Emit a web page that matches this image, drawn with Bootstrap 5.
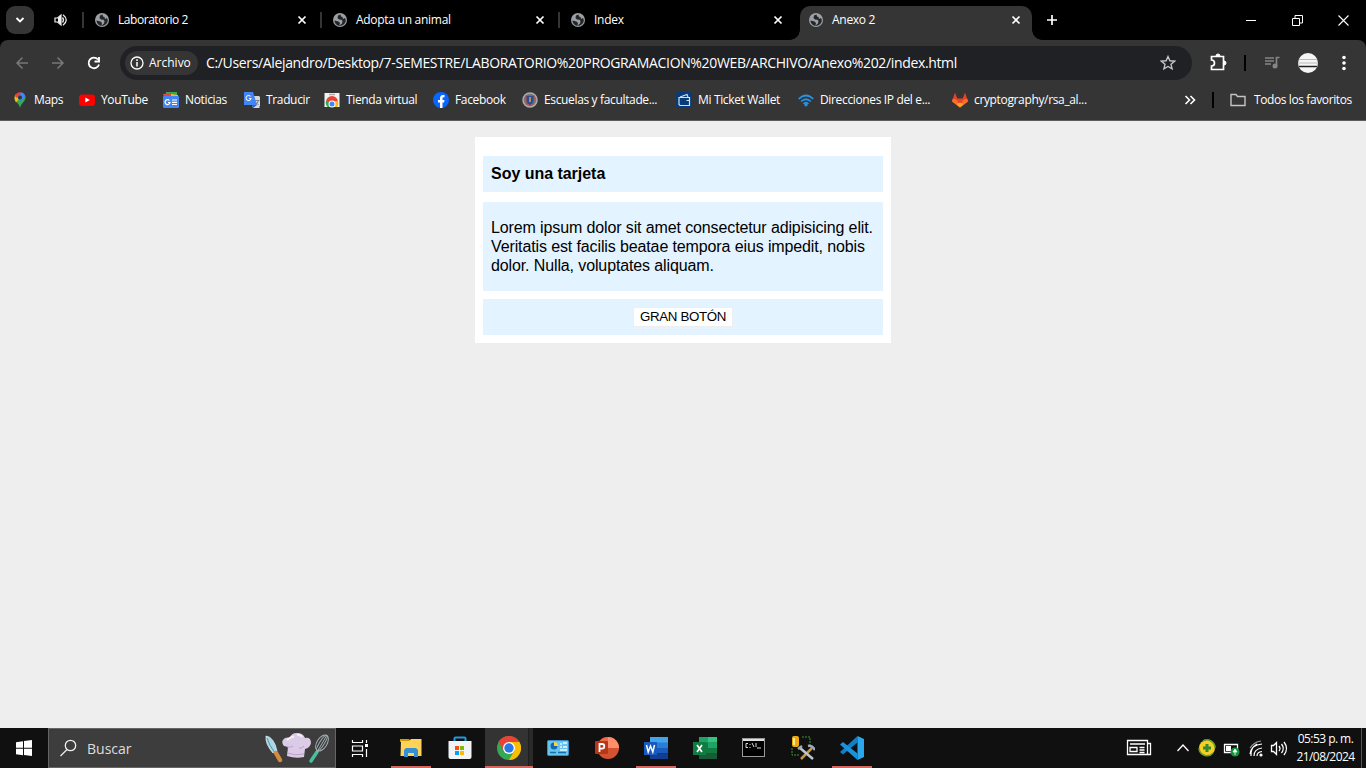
<!DOCTYPE html>
<html lang="es">
<head>
<meta charset="utf-8">
<meta name="viewport" content="width=device-width, initial-scale=1">
<title>Anexo 2</title>
<link href="https://cdn.jsdelivr.net/npm/bootstrap@5.3.0/dist/css/bootstrap.min.css" rel="stylesheet">
<style>
body{font-family:"Open Sans","Noto Sans",sans-serif;font-size:12px;line-height:16px;color:#fff;height:100vh;background:#eee;overflow:hidden;white-space:nowrap}
svg{display:block;flex:none}
.tabstrip{height:40px;background:#000}
.tabsearch{width:28px;height:28px;margin:0 20px 0 6px;border-radius:9px;background:#353535}
.chrome-tab{width:238px;height:34px;padding:0 14px 0 12px;position:relative;letter-spacing:-.28px}
.chrome-tab.first{margin-left:-1px;letter-spacing:-.45px}
.chrome-tab::before{content:"";position:absolute;left:-1px;top:9px;width:2px;height:16px;background:#353535}
.chrome-tab .lbl{margin-left:9px}
.chrome-tab.on{width:232px;margin-left:3px;padding:0 11px 6px 9px;align-self:flex-end;background:#353535;border-radius:10px 10px 0 0}
.chrome-tab.on::before,.chrome-tab.on::after{content:"";position:absolute;top:auto;bottom:0;width:10px;height:10px}
.chrome-tab.on::before{left:-10px;background:radial-gradient(circle at 0 0,transparent 9.5px,#353535 10px)}
.chrome-tab.on::after{right:-10px;background:radial-gradient(circle at 100% 0,transparent 9.5px,#353535 10px)}
.newtab{margin-left:14px}
.winbtns{gap:35px;padding-right:17px}
.shell{background:#000}
.bars{height:81px;background:#353535;border-bottom:1px solid #5c5c5c;border-radius:8px 8px 0 0}
.tools{height:46px}
.omni{width:1072px;height:34px;border-radius:17px;background:#202124;padding-left:5px;padding-right:16px}
.chip{width:73px;height:24px;border-radius:12px;background:#353535;padding-left:5px;gap:5px}
.url{margin-left:8px;font-size:14px;line-height:20px;letter-spacing:-.35px}
.marks{height:28px;padding-left:12px;letter-spacing:-.35px}
.mk{gap:6px;overflow:hidden}
.mk:nth-child(1){width:67px}.mk:nth-child(2){width:84px}.mk:nth-child(3){width:81px}.mk:nth-child(4){width:80px}
.mk:nth-child(5){width:109px}.mk:nth-child(6){width:89px}.mk:nth-child(7){width:154px}.mk:nth-child(8){width:122px}
.mk:nth-child(9){width:154px}.mk:nth-child(10){width:228px}
.allmarks{margin-left:-26px;letter-spacing:-.4px}
.viewport{font-family:"Liberation Sans",Arial,sans-serif;font-size:16px;line-height:19px;color:#000;padding-top:16px;white-space:normal}
.tarjeta{width:416px;background:#fff;padding:19px 8px 8px}
.tarjeta>*{background:#e3f3ff;padding:8px}
.tarjeta h1{font-size:16px;line-height:20px;font-weight:700;height:36px;margin:0 0 10px;letter-spacing:-.03px}
.tarjeta p{padding:16px 8px;height:89px;margin:0 0 8px;letter-spacing:-.12px}
.pie{height:36px}
.gran{width:100px;height:20px;background:#fff;border:1px solid #eee;font-size:13.33px;line-height:18px;padding:0;color:#000;letter-spacing:-.35px}
.taskbar{height:40px;background:#101010}
.buscar{width:288px;height:40px;background:#3d3d3d;border:1px solid #666;padding-left:11px;padding-right:6px;font-size:14px;color:#ddd}
.buscar span{margin-left:9px;padding-top:1px}
.app{width:49px;height:40px;position:relative}
.app.run::after{content:"";position:absolute;left:4.5px;width:40px;bottom:0;height:2px;background:#d2685f}
.app.cur{background:linear-gradient(90deg,transparent 1px,#333 1px,#333 44px,#1e1e1e 44px,#1e1e1e 45px,#292929 45px)}
.app.cur::after{left:1px;width:48px}
.clock{width:68px;line-height:18px;letter-spacing:-.55px;padding-right:3px}
.edge{width:1px;height:40px;background:#555;margin-right:4px}
</style>
</head>
<body class="d-flex flex-column">
<svg width="0" height="0" class="position-absolute">
<defs>
<symbol id="globe" viewBox="0 0 14 14"><circle cx="7" cy="7" r="7" fill="#9aa0a6"/><path d="M7.500 1.500 5 2.500 4.500 5l1.500 1.500 2.500.3L9.500 8 9 10.500 6.500 12.500 7 10 5.500 8.500 1.500 7.500C1.500 10.500 4 12.800 7 12.800c3.400 0 5.800-2.700 5.800-5.800L12 5 10 6 9.500 4 8 3.500Z" fill="#262626"/></symbol>
<symbol id="cross" viewBox="0 0 10 10"><path d="M1.500 1.500l7 7m0-7l-7 7" stroke="#fff" stroke-width="1.700"/></symbol>
</defs>
</svg>
<header class="shell">
<div class="tabstrip d-flex align-items-center">
<div class="tabsearch d-flex align-items-center justify-content-center"><svg width="10" height="8"><path d="M1.500 2l3.500 3.500L8.500 2" fill="none" stroke="#fff" stroke-width="1.800"/></svg></div>
<svg width="14" height="14" class="me-3"><path d="M1 5h2.500L7 2v10L3.500 9H1Z" fill="none" stroke="#eee" stroke-width="1.200"/><path d="M4 5l3-3v10L4 9Z" fill="#eee"/><path d="M8.500 4.500q2 2.500 0 5M9 1.800q6.500 5.200 0 10.400" fill="none" stroke="#eee" stroke-width="1.300"/></svg>
<div class="chrome-tab first d-flex align-items-center"><svg width="14" height="14"><use href="#globe"/></svg><span class="lbl">Laboratorio 2</span><svg width="10" height="10" class="ms-auto"><use href="#cross"/></svg></div>
<div class="chrome-tab d-flex align-items-center"><svg width="14" height="14"><use href="#globe"/></svg><span class="lbl">Adopta un animal</span><svg width="10" height="10" class="ms-auto"><use href="#cross"/></svg></div>
<div class="chrome-tab d-flex align-items-center"><svg width="14" height="14"><use href="#globe"/></svg><span class="lbl">Index</span><svg width="10" height="10" class="ms-auto"><use href="#cross"/></svg></div>
<div class="chrome-tab on d-flex align-items-center"><svg width="14" height="14"><use href="#globe"/></svg><span class="lbl">Anexo 2</span><svg width="10" height="10" class="ms-auto"><use href="#cross"/></svg></div>
<svg width="12" height="12" class="newtab"><path d="M6 1v10M1 6h10" stroke="#fff" stroke-width="1.700"/></svg>
<div class="winbtns d-flex ms-auto align-items-center"><svg width="11" height="11"><path d="M0 5.500h10" stroke="#fff"/></svg><svg width="11" height="11"><path d="M.5 3.500h7v7h-7ZM3 3V.5h7.500V8H8" fill="none" stroke="#fff"/></svg><svg width="11" height="11"><path d="M.5.5l10 10m0-10l-10 10" stroke="#fff" stroke-width="1.100"/></svg></div>
</div>
<div class="bars">
<div class="tools d-flex align-items-center">
<svg width="120" height="34" fill="none" stroke="#777" stroke-width="1.500"><path d="M28 17H17m5.500-5.500L17 17l5.500 5.500M52 17h11m-5.500-5.500L63 17l-5.500 5.500"/><path d="M98 13.500A5.300 5.300 0 1 0 99 18.500" stroke="#fff" stroke-width="1.800"/><path d="M94.500 15.500H99V11" stroke="#fff" stroke-width="1.900"/></svg>
<div class="omni d-flex align-items-center">
<div class="chip d-flex align-items-center"><svg width="14" height="14"><circle cx="7" cy="7" r="6" fill="none" stroke="#fff" stroke-width="1.300"/><path d="M7 6v4.500M7 3.300V5" stroke="#fff" stroke-width="1.500"/></svg><span>Archivo</span></div>
<span class="url">C:/Users/Alejandro/Desktop/7-SEMESTRE/LABORATORIO%20PROGRAMACION%20WEB/ARCHIVO/Anexo%202/index.html</span>
<svg width="16" height="16" class="ms-auto"><path d="M8 1.500l1.900 4.300 4.700.4-3.600 3.100 1.100 4.600L8 11.500l-4.100 2.400L5 9.300 1.400 6.200l4.700-.4Z" fill="none" stroke="#c4c4c4" stroke-width="1.400"/></svg>
</div>
<svg width="174" height="34"><path d="M20 10.500H31.500V23.500H19.500V20a3 3 0 0 0 0-6V10.500Z" fill="none" stroke="#fff" stroke-width="1.700"/><path d="M24 10a2 2 0 0 1 4 0ZM32 15a2 2 0 0 1 0 4Z" fill="#fff" stroke="#fff"/><path d="M52 9h2v16h-2Z" fill="#000"/><path d="M73 12h9m-9 3h9m-9 3h6M87.500 11.500H84.500V20" fill="none" stroke="#858585" stroke-width="1.700"/><circle cx="83" cy="20" r="2.500" fill="#858585"/><circle cx="116" cy="17" r="10" fill="#f5f5f5"/><path d="M107 13.500h18M106 17h20" stroke="#bbb"/><path d="M107 20.500h18" stroke="#222" stroke-width="1.500"/><g fill="#fff"><circle cx="152" cy="11.500" r="1.800"/><circle cx="152" cy="17" r="1.800"/><circle cx="152" cy="22.500" r="1.800"/></g></svg>
</div>
<nav class="marks d-flex align-items-center">
<div class="mk d-flex align-items-center"><svg width="16" height="16"><path d="M8 16C7 11 2.500 9.500 2.500 5.500L8 6l5.500-1C14 9 9 11 8 16Z" fill="#34a853"/><path d="M2.500 6A5.500 5.500 0 0 1 4 2l4 4-4 4.500Q2.500 8.500 2.500 6Z" fill="#fbbc04"/><path d="M4 2a5.500 5.500 0 0 1 5.500-1.500L5 6 2.800 4Z" fill="#ea4335"/><path d="M9 0.300A5.500 5.500 0 0 1 13.500 5L8 9.500 5.500 6Z" fill="#4285f4"/><circle cx="8" cy="5.500" r="2" fill="#353535"/></svg><span>Maps</span></div>
<div class="mk d-flex align-items-center"><svg width="16" height="16"><rect y="2.500" width="16" height="11.500" rx="3" fill="#f00"/><path d="M6.300 5.500v5l4.500-2.500Z" fill="#fff"/></svg><span>YouTube</span></div>
<div class="mk d-flex align-items-center"><svg width="16" height="16"><path d="M3 0h11v6H3Z" fill="#34a853"/><path d="M0 2l8-1 1 5H1Z" fill="#ea4335"/><path d="M8 2l7 1v4H8Z" fill="#fbbc04"/><rect y="4" width="16" height="12" rx="1" fill="#4285f4"/><path d="M6.500 8.500A2.500 2.500 0 1 0 7 10.500H5M9 8h5M9 10.300h5M9 12.500h5" fill="none" stroke="#fff" stroke-width="1.200"/></svg><span>Noticias</span></div>
<div class="mk d-flex align-items-center"><svg width="16" height="16"><path d="M6 4h9.500v12H9Z" fill="#d8d8d8"/><path d="M0 0h9l4 13H0Z" fill="#4285f4"/><path d="M6.500 4.500A2.500 2.500 0 1 0 7 6.500H5" fill="none" stroke="#eee" stroke-width="1.100"/><path d="M11 5h5v9h-2.500Z" fill="#d8d8d8"/><path d="M11 8.500h4.500m-1 0q-1 3-3.500 4.500m.5-3l3 3" fill="none" stroke="#71808c"/><path d="M9 16l4-3H8Z" fill="#1967d2"/></svg><span>Traducir</span></div>
<div class="mk d-flex align-items-center"><svg width="16" height="16"><path d="M.5 1h15v14H.5Z" fill="#f3f3f3"/><path d="M5 2.500h6" stroke="#aaa" stroke-width="1.500"/><path d="M2 10a6 6 0 0 1 12 0l-3 1H5Z" fill="#ea4335"/><path d="M2 8.500A7 7 0 0 0 3.500 15H8L5 10Z" fill="#34a853"/><path d="M8 15h5.500Q15 12 14 9h-4Z" fill="#fbbc04"/><circle cx="8" cy="12" r="3.500" fill="#fff"/><circle cx="8" cy="12" r="2.500" fill="#4285f4"/></svg><span>Tienda virtual</span></div>
<div class="mk d-flex align-items-center"><svg width="16" height="16"><circle cx="8" cy="8" r="8" fill="#0866ff"/><path d="M7 15.900V10.500H5V8h2V6.500Q7 3 10 3h1.500v2.300H10.500Q9.500 5.300 9.500 6.500V8h2L11 10.500H9.500v5.400Z" fill="#fff"/></svg><span>Facebook</span></div>
<div class="mk d-flex align-items-center"><svg width="16" height="16"><circle cx="8" cy="8" r="7" fill="#777" stroke="#b0aba5" stroke-width="1.500"/><path d="M4 3.500h8V9q0 3-4 4.500Q4 12 4 9Z" fill="#294f91" stroke="#c54b40"/><path d="M8 5v5" stroke="#e19a66" stroke-width="1.500"/></svg><span>Escuelas y facultade...</span></div>
<div class="mk d-flex align-items-center"><svg width="16" height="16"><rect width="16" height="16" rx="2" fill="#063c7c"/><path d="M3 5.500h10.500v8H4L3 12.500ZM4 5l7-2.500L12 5M10.500 8.500h3" fill="none" stroke="#ddd" stroke-width="1.200"/></svg><span>Mi Ticket Wallet</span></div>
<div class="mk d-flex align-items-center"><svg width="16" height="16" fill="none" stroke="#2593e6" stroke-width="1.700"><path d="M.7 7q7.300-7 14.600 0M3.200 9.500q4.800-4.500 9.600 0M5.500 12q2.500-2.500 5 0"/><circle cx="8" cy="12.800" r=".8"/></svg><span>Direcciones IP del e...</span></div>
<div class="mk d-flex align-items-center"><svg width="16" height="16"><path d="M3 .5l2.300 6h5.400l2.300-6L16 9.500l-8 6-8-6Z" fill="#e24329"/><path d="M.8 6.500L5 8l3 7.500-8-6ZM15.200 6.500L11 8l-3 7.500 8-6Z" fill="#fc6d26"/><path d="M4.500 12q3.500-2.500 7 0L8 15.500Z" fill="#fca326"/></svg><span>cryptography/rsa_al...</span></div>
<svg width="100" height="24"><path d="M5.500 8l4 4-4 4m5-8l4 4-4 4" fill="none" stroke="#fff" stroke-width="1.600"/><path d="M32 4h2v16h-2Z" fill="#000"/><path d="M51 17.500v-11h5l1.500 2h7.500v9Z" fill="none" stroke="#c4c4c4" stroke-width="1.400"/></svg>
<span class="allmarks">Todos los favoritos</span>
</nav>
</div>
</header>
<main class="viewport flex-grow-1">
<section class="tarjeta mx-auto">
<h1>Soy una tarjeta</h1>
<p>Lorem ipsum dolor sit amet consectetur adipisicing elit. Veritatis est facilis beatae tempora eius impedit, nobis dolor. Nulla, voluptates aliquam.</p>
<div class="pie d-flex align-items-center justify-content-center"><button class="gran">GRAN BOTÓN</button></div>
</section>
</main>
<footer class="taskbar d-flex align-items-center">
<svg width="48" height="40"><path d="M16 14.200l7-1v6.500h-7ZM24 13l8-1v7.700h-8ZM16 20.700h7v6.500l-7-1ZM24 20.700h8V28l-8-1Z" fill="#fff"/></svg>
<div class="buscar d-flex align-items-center"><svg width="18" height="18"><circle cx="10.500" cy="6.500" r="5.200" fill="none" stroke="#eee" stroke-width="1.300"/><path d="M7 10.500L.5 17" stroke="#eee" stroke-width="1.300"/></svg><span>Buscar</span>
<svg width="66" height="38" class="ms-auto"><path d="M3 7q8 1 11 15l-4 2Q2 15 3 7Z" fill="#a7d6e5" stroke="#e7f5fa" stroke-width=".7"/><path d="M4 9q2 7 8 15" stroke="#5494b1" fill="none"/><path d="M13 24l4 7" stroke="#d38b41" stroke-width="4.500" stroke-linecap="round"/><path d="M21 17q-4-5 1-8 3-1 5 0 1-5 7-5t8 5q6-1 6 5-1 5-6 6l-1 8q-8 2-17-1l1-9Z" fill="#dccbe6"/><path d="M24 18q3 1 6-1m6 2q3 1 5-2M24 24q9 3 17 1" stroke="#b9a2ca" fill="none"/><path d="M24 11q5-4 7-3m3-2q3-1 5 2" stroke="#f5eef9" stroke-width="2" fill="none"/><path d="M48 32l6-9" stroke="#48bea0" stroke-width="3.500" stroke-linecap="round"/><g fill="none" stroke="#a2adb1"><ellipse cx="59" cy="14" rx="5" ry="9" transform="rotate(32 59 14)"/><ellipse cx="59" cy="14" rx="2.300" ry="9" transform="rotate(32 59 14)"/><path d="M64 6L54 23"/></g></svg></div>
<svg width="50" height="40" fill="none" stroke="#fff" stroke-width="1.200"><path d="M16.500 12v2.500h10V12M16.500 18h10v5h-10ZM16.500 29v-2.500h10V29M30.500 12v3M30.500 21v8"/><path d="M29 16h3v3h-3Z" fill="#fff" stroke="none"/></svg>
<div class="app run d-flex align-items-center justify-content-center"><svg width="22" height="22"><path d="M0 2h9l2 3H0Z" fill="#d79b00"/><path d="M1 4h8l2-2h10.500v17H.5Z" fill="#ffd35a"/><path d="M4 20V13l2-2h10l2 2v7h-4v-4H8v4Z" fill="#3791d1"/></svg></div>
<div class="app d-flex align-items-center justify-content-center"><svg width="24" height="24"><path d="M6.500 6V2.500q0-1 1-1h9q1 0 1 1V6" fill="none" stroke="#2399dd" stroke-width="2"/><path d="M.5 5h23v16q0 2-2 2h-19q-2 0-2-2Z" fill="#f2f3f5"/><path d="M7 10h4v4H7Z" fill="#f25022"/><path d="M12 10h4v4h-4Z" fill="#7fba00"/><path d="M7 15h4v4H7Z" fill="#00a4ef"/><path d="M12 15h4v4h-4Z" fill="#ffb900"/></svg></div>
<div class="app run cur d-flex align-items-center justify-content-center"><svg width="24" height="24"><circle cx="12" cy="12" r="12" fill="#34a853"/><path d="M1.600 6A12 12 0 0 1 22.400 6H12L6.800 15Z" fill="#ea4335"/><path d="M12 6H22.400A12 12 0 0 1 12 24L17.200 15Z" fill="#fbbc04"/><circle cx="12" cy="12" r="6" fill="#fff"/><circle cx="12" cy="12" r="4.700" fill="#2878e8"/></svg></div>
<div class="app d-flex align-items-center justify-content-center"><svg width="22" height="18"><rect x=".5" y="1.500" width="21" height="15" rx="1" fill="#67c4f1" stroke="#358cc6"/><circle cx="7" cy="7" r="3.500" fill="#1769ad"/><path d="M7 7V3a4 4 0 0 1 4 4Z" fill="#ffd13b"/><path d="M13 5h2m1-1h4M13 8h2m1 0h4M13 11h7" stroke="#eaf8ff" stroke-width="1.500"/><path d="M3 13.500h6m2 0h8" stroke="#176cad" stroke-width="1.300"/></svg></div>
<div class="app d-flex align-items-center justify-content-center"><svg width="24" height="24"><circle cx="13" cy="12" r="11" fill="#d35230"/><path d="M13 1a11 11 0 0 1 11 11H13Z" fill="#ff8f6b"/><path d="M13 1v11H2A11 11 0 0 1 13 1Z" fill="#ed6c47"/><rect y="5" width="13" height="13" rx="1" fill="#b83518"/><path d="M4.500 16V8H7a2.300 2.300 0 0 1 0 4.600H5" fill="none" stroke="#fff" stroke-width="1.800"/></svg></div>
<div class="app run d-flex align-items-center justify-content-center"><svg width="24" height="22"><path d="M6 0h18v6H6Z" fill="#41a5ee"/><path d="M6 5.500h18V11H6Z" fill="#2b7cd3"/><path d="M6 11h18v5.500H6Z" fill="#185abd"/><path d="M6 16.500h18V22H6Z" fill="#103f91"/><path d="M0 5h13v13H0Z" fill="#185abd"/><path d="M2.500 8l1.700 7L6.500 9l2.300 6 1.700-7" fill="none" stroke="#fff" stroke-width="1.500"/></svg></div>
<div class="app d-flex align-items-center justify-content-center"><svg width="24" height="22"><path d="M6 0h18v6H6Z" fill="#33c481"/><path d="M6 0h9v6H6Z" fill="#21a366"/><path d="M6 5.500h18V16H6Z" fill="#107c41"/><path d="M15 5.500h9V11h-9Z" fill="#21a366"/><path d="M6 16h18v6H6Z" fill="#185c37"/><path d="M0 5h13v13H0Z" fill="#107c41"/><path d="M4 8l5 7M9 8l-5 7" stroke="#fff" stroke-width="1.700"/></svg></div>
<div class="app d-flex align-items-center justify-content-center"><svg width="24" height="20"><rect x=".5" y=".5" width="22" height="18" fill="#000" stroke="#999"/><path d="M1 2h21" stroke="#dedede" stroke-width="2"/><path d="M6 5.500H4v4h2M8 6v1m0 2v1m2-5l2 4m2-4v4M15 10h4" fill="none" stroke="#ddd"/></svg></div>
<div class="app d-flex align-items-center justify-content-center"><svg width="24" height="26"><rect x="1" y="1" width="7" height="11" rx="2" fill="#edaa15"/><path d="M3 3v7" stroke="#fff08b" stroke-width="2"/><path d="M11 2h8v8M1 13v7h7" fill="none" stroke="#3a982d" stroke-dasharray="2 1"/><path d="M10 24l11-11" stroke="#c39b48" stroke-width="2.500"/><path d="M9 13l13 11" stroke="#bdc5ce" stroke-width="2.500"/><path d="M17 11q4-1 7 4M7 14l4-3" stroke="#9faabb" stroke-width="2.500" fill="none"/></svg></div>
<div class="app run d-flex align-items-center justify-content-center"><svg width="24" height="24"><path d="M17.500 0v6.500L3 18.500 0 16 17.500 0Z" fill="#0f7fc8"/><path d="M0 8.500L3 6l14.500 11.500V24Z" fill="#1b93dc"/><path d="M17.500 0L24 3v18l-6.500 3Z" fill="#2aa8ee"/></svg></div>
<svg width="170" height="40" class="ms-auto" fill="none" stroke="#fff" stroke-width="1.300"><path d="M4.500 12.500h20v14h-20ZM24.500 15.500h3v11h-4M7 16h15M7 19.500h7v4H7ZM16.500 19.500h5M16.500 22h5M16.500 24.500h5M54.500 23l5.500-6 5.500 6"/><circle cx="84" cy="20" r="8" fill="#f4cf28" stroke="none"/><path d="M76 20a8 8 0 0 0 14 5M92 20a8 8 0 0 0-12-7" stroke="#6b9e2b" stroke-width="1.500"/><path d="M84 16v8M80 20h8" stroke="#338b2b" stroke-width="3"/><path d="M101.500 16.500h13v8h-13Z"/><path d="M103 18h5v5h-5Z" fill="#fff" stroke="none"/><circle cx="112" cy="24" r="4.500" fill="#15923b" stroke="none"/><path d="M112 21l2 3h-4ZM112 22v5" fill="#fff" stroke-width=".8"/><g stroke-width="1.200"><path d="M131 28q0-7 8-8M134 28q0-4 5-4.500"/><path d="M127 26q1-9 12-10M128 28q-1-8 6-12" /><path d="M127 20q4-6 11-7" stroke="#999"/><circle cx="138" cy="27" r="1" fill="#fff"/></g><path d="M148.500 17.500h2l3-3v12l-3-3h-2ZM156 18q2 2.500 0 5M158.500 16q3.500 4.500 0 9M161 14q5 6.500 0 13"/></svg>
<div class="clock text-center">05:53 p. m.<br>21/08/2024</div>
<div class="edge"></div>
</footer>
<script src="https://cdn.jsdelivr.net/npm/bootstrap@5.3.0/dist/js/bootstrap.bundle.min.js"></script>
</body>
</html>
